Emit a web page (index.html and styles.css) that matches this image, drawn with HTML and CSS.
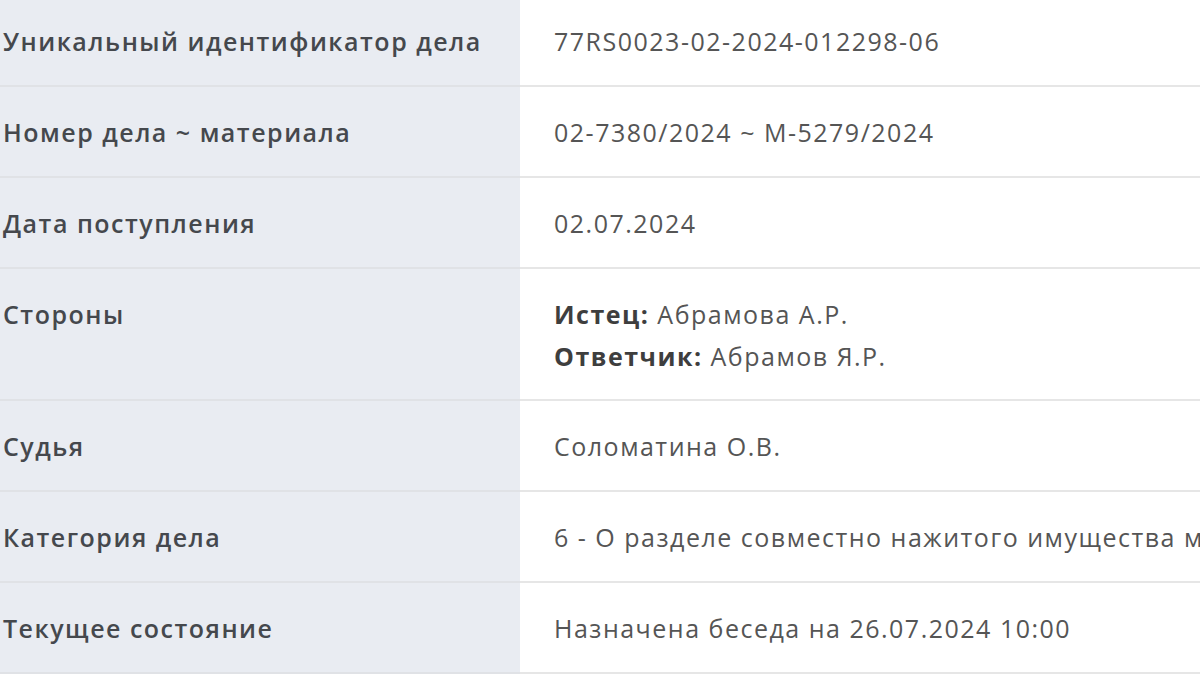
FILE: index.html
```html
<!DOCTYPE html>
<html lang="ru">
<head>
<meta charset="utf-8">
<link rel="stylesheet" href="styles.css">
</head>
<body>
<table class="card">
  <tr><th>Уникальный идентификатор дела</th><td>77RS0023-02-2024-012298-06</td></tr>
  <tr><th>Номер дела ~ материала</th><td>02-7380/2024 ~ М-5279/2024</td></tr>
  <tr><th>Дата поступления</th><td>02.07.2024</td></tr>
  <tr class="sides"><th>Стороны</th><td><b>Истец:</b> Абрамова А.Р.<br><b>Ответчик:</b> Абрамов Я.Р.</td></tr>
  <tr><th>Судья</th><td>Соломатина О.В.</td></tr>
  <tr><th>Категория дела</th><td>6 - О разделе совместно нажитого имущества между супругами</td></tr>
  <tr><th>Текущее состояние</th><td>Назначена беседа на 26.07.2024 10:00</td></tr>
</table>
</body>
</html>
```
FILE: styles.css
```css
html, body {
  margin: 0;
  padding: 0;
  background: #ffffff;
  overflow: hidden;
}
.card {
  border-collapse: collapse;
  width: 1260px;
  margin: -4px 0 0 -21px;
  font-family: "Open Sans", "Noto Sans", sans-serif;
  font-size: 25px;
  line-height: 42px;
  letter-spacing: 1.5px;
  color: #454545;
  table-layout: fixed;
}
.card th {
  width: 541px;
  background: #e9ecf2;
  text-align: left;
  font-weight: 600;
  letter-spacing: 1.5px;
  color: #45484d;
  vertical-align: top;
  padding: 24px 24px 23px 24px;
  border-bottom: 2px solid #e0e2e6;
  box-sizing: border-box;
}
.card td {
  vertical-align: top;
  padding: 24px 35px 23px 34px;
  border-bottom: 2px solid #e6e6e6;
  color: #555555;
  white-space: nowrap;
  overflow: hidden;
}
.card .sides th,
.card .sides td {
  padding-bottom: 22px;
}
.card td b {
  font-weight: 700;
  color: #3e3e3e;
}
```
